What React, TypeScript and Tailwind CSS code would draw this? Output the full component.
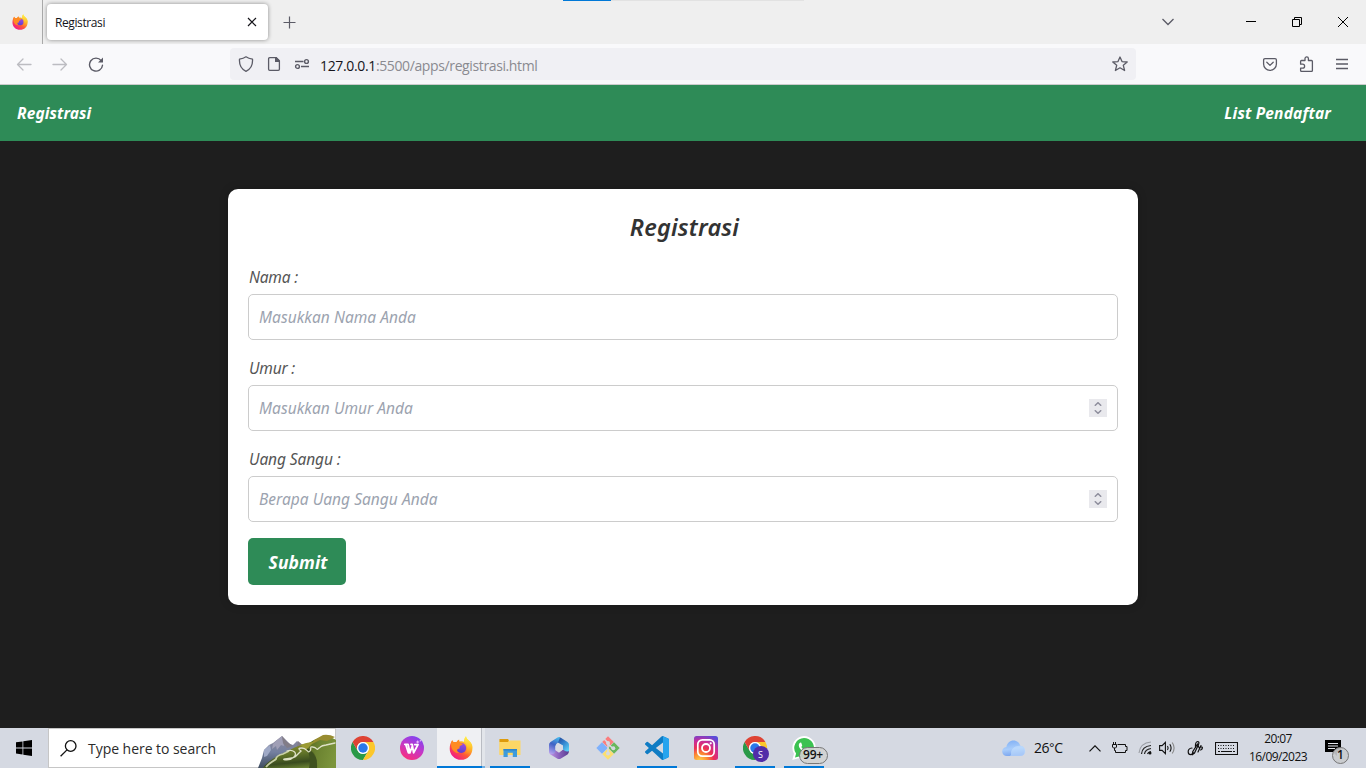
import type { ReactNode } from "react";

const ui = "font-['Open_Sans','Noto_Sans',sans-serif]";
const body = "font-['Noto_Sans','Open_Sans',sans-serif]";

function FirefoxLogo({ size, id }: { size: number; id: string }) {
  return (
    <svg width={size} height={size} viewBox="0 0 24 24">
      <defs>
        <linearGradient id={id + "a"} x1="0.85" y1="0.1" x2="0.2" y2="0.95">
          <stop offset="0" stopColor="#fff44f" />
          <stop offset="0.3" stopColor="#ffb02a" />
          <stop offset="0.6" stopColor="#ff5a36" />
          <stop offset="1" stopColor="#f0158c" />
        </linearGradient>
        <linearGradient id={id + "b"} x1="0.6" y1="0" x2="0.4" y2="1">
          <stop offset="0" stopColor="#a04be0" />
          <stop offset="1" stopColor="#5b3fd0" />
        </linearGradient>
        <linearGradient id={id + "c"} x1="0.6" y1="0" x2="0.5" y2="1">
          <stop offset="0" stopColor="#fff44f" />
          <stop offset="0.55" stopColor="#ffc52e" />
          <stop offset="1" stopColor="#ff8a16" stopOpacity="0.3" />
        </linearGradient>
      </defs>
      <path
        d="M3.2 4.2c.5 1 .9 1.5 1.5 2 .9-.2 1.9-.2 2.800.1C8 4.900 9 4 10.200 3.700c-.3.8-.2 1.500.1 2.100 2-.8 3.700-.6 5 .3-.4-2 .3-4.400 1.700-5.800.2 2 1.500 3.100 3.200 4.800 2 2 3.200 4.600 3.200 7.600 0 6.200-5 11.100-11.300 11.100S.7 18.900.7 12.700c0-3.400 1-6.400 2.500-8.500z"
        fill={`url(#${id}a)`}
      />
      <path d="M17 .3c-1.400 1.400-2.100 3.800-1.700 5.800 2.500 1.700 3.400 4.300 2.800 7-.5 2.500-2 4-4 5.300 4.800.2 9.200-3 9.300-7.500 0-2.300-1.200-4.200-3.200-6C18.500 3.300 17.200 2.300 17 .3z" fill={`url(#${id}c)`} />
      <circle cx="12.300" cy="12" r="4.900" fill={`url(#${id}b)`} />
      <path d="M3.200 4.200c.5 1 .9 1.500 1.500 2 .9-.2 1.900-.2 2.800.1C8 4.900 9 4 10.200 3.700c-.3 1.600.3 2.700 1.900 3.500.6.300 1.300.4 1.700.9-.2 1.300-2.400 1.300-3.200 2.300-.3.900.3 1.700-.4 2.300-1.200-.3-2 .4-2.200 1.500.2 1.500 1.200 2.300 2.200 2.800-4 .2-6.500-2-7.600-5C1.700 9 2 6.200 3.200 4.200z" fill="#ff8b22" />
    </svg>
  );
}

function ChromeLogo() {
  return (
    <svg width="24" height="24" viewBox="0 0 48 48">
      <path d="M3.200 12 13.600 30A12 12 0 0 0 34.400 30L24 48A24 24 0 0 1 3.200 12z" fill="#2a9a48" />
      <path d="M24 48 34.400 30A12 12 0 0 0 24 12H44.800A24 24 0 0 1 24 48z" fill="#fcc72b" />
      <path d="M44.800 12H24A12 12 0 0 0 13.600 30L3.200 12A24 24 0 0 1 44.800 12z" fill="#de4334" />
      <circle cx="24" cy="24" r="12" fill="#fff" />
      <circle cx="24" cy="24" r="9.500" fill="#2a78ea" />
    </svg>
  );
}

function WpsLogo() {
  return (
    <svg width="24" height="24" viewBox="0 0 24 24">
      <defs>
        <linearGradient id="wps" x1="0.8" y1="0" x2="0.3" y2="1">
          <stop offset="0" stopColor="#7a45f5" />
          <stop offset="0.5" stopColor="#c437c8" />
          <stop offset="1" stopColor="#fb2f7a" />
        </linearGradient>
      </defs>
      <circle cx="12" cy="12" r="12" fill="url(#wps)" />
      <path d="M4.800 8.300H8L10 16.800H8.400L5.800 8.800M10 16.500 12.200 10.500M11 8.300H12.200L13.600 16.800 18 8.600H14.800" fill="none" stroke="#fff" strokeWidth="1.800" strokeLinejoin="round" strokeLinecap="round" />
      <path d="M17.700 4.500v3M16.200 6h3M20.300 4v1.500" stroke="#f5c8ff" strokeWidth="0.900" />
    </svg>
  );
}

function ExplorerLogo() {
  return (
    <svg width="22" height="20" viewBox="0 0 22 20">
      <path d="M.5 1.500h8.500l1.500 2H21v13H.5z" fill="#fcd35c" />
      <path d="M.5 1h8.500l.8 1.200-.8 1.800H.5z" fill="#dd9b0c" />
      <path d="M.5 4h9.200l1.200-1.500H21.500v14.500H.5z" fill="#fdd765" />
      <path d="M4.500 11h13.500v8h-4.200v-4.300H8.700V19H4.500z" fill="#3d9bdc" />
      <path d="M4.500 11h13.500v1.600H4.500z" fill="#2f86cc" />
    </svg>
  );
}

function OfficeLogo() {
  return (
    <svg width="22" height="24" viewBox="0 0 22 24">
      <defs>
        <linearGradient id="o1" x1="0.6" y1="0" x2="0.3" y2="1">
          <stop offset="0" stopColor="#45b3ea" />
          <stop offset="0.45" stopColor="#3f62c4" />
          <stop offset="1" stopColor="#b4a0ee" />
        </linearGradient>
        <linearGradient id="o2" x1="0" y1="0" x2="0.8" y2="1">
          <stop offset="0" stopColor="#25418f" />
          <stop offset="0.45" stopColor="#2e78c8" />
          <stop offset="1" stopColor="#58cdf4" />
        </linearGradient>
        <linearGradient id="o3" x1="0" y1="0" x2="1" y2="0">
          <stop offset="0" stopColor="#c49be8" />
          <stop offset="0.5" stopColor="#8a62bd" />
          <stop offset="1" stopColor="#5a3c90" />
        </linearGradient>
      </defs>
      <path d="m1 15 6-1 4 2.800 4-3.300 6 1q0 3-1.500 4l-7 4.200q-1.500.8-3 0l-7-4.200Q1 17.200 1 15z" fill="url(#o3)" />
      <path d="M11 1.200q1 0 1.800.5L19.500 6Q21 7 21 8.800v6.200q-3 1.500-6-1.500V9.500L9 6z" fill="url(#o2)" />
      <path d="M12.300 1Q11 .7 9.500 1.600L2.500 6Q1 7 1 8.800v6.500q0 2 1.500 3 4.500.2 4.800-3.300V10Q8 7.500 10 6.500z" fill="url(#o1)" />
      <path d="M11.500 8 14.600 9.800v4L11.200 16l-3.500-2V10z" fill="#d8dae4" />
    </svg>
  );
}

function GitLogo() {
  return (
    <svg width="24" height="24" viewBox="0 0 24 24">
      <path d="M12 .3 17.800 6 12 11.800 6.200 6z" fill="#fb7d7d" />
      <path d="M18 6.200 23.700 12 18 17.800 12.200 12z" fill="#69b75c" />
      <path d="M12 12.200 17.800 18 12 23.700 6.200 18z" fill="#fbdf72" />
      <path d="M6 6.200 11.800 12 6 17.800 .3 12z" fill="#7eb1fc" />
      <path d="M8 2.800 12 7v11M12 8l5.500 5" stroke="#d5d9e1" strokeWidth="1.600" fill="none" />
      <circle cx="12" cy="7" r="2" fill="#d5d9e1" />
      <circle cx="12" cy="17.500" r="2" fill="#d5d9e1" />
      <circle cx="17.300" cy="12.300" r="2" fill="#d5d9e1" />
    </svg>
  );
}

function CodeLogo() {
  return (
    <svg width="24" height="24" viewBox="0 0 24 24">
      <path
        d="M23.150 2.587 18.210.21a1.494 1.494 0 0 0-1.705.29l-9.460 8.630-4.120-3.128a.999.999 0 0 0-1.276.057L.327 7.261A1 1 0 0 0 .326 8.740L3.899 12 .326 15.260a1 1 0 0 0 .001 1.479L1.650 17.940a.999.999 0 0 0 1.276.057l4.120-3.128 9.460 8.630a1.492 1.492 0 0 0 1.704.29l4.942-2.377A1.500 1.500 0 0 0 24 20.060V3.939a1.500 1.500 0 0 0-.85-1.352zm-5.146 14.861L10.826 12l7.178-5.448v10.896z"
        fill="#0f7cc4"
      />
      <path d="M18 .2 23.150 2.587A1.500 1.500 0 0 1 24 3.939V20.060a1.500 1.500 0 0 1-.85 1.352L18 23.800z" fill="#27a4ee" />
    </svg>
  );
}

function InstagramLogo() {
  return (
    <svg width="24" height="24" viewBox="0 0 24 24">
      <defs>
        <radialGradient id="ig" cx="0.25" cy="1.050" r="1.150">
          <stop offset="0" stopColor="#ffd84f" />
          <stop offset="0.28" stopColor="#fb8b32" />
          <stop offset="0.5" stopColor="#ec2f55" />
          <stop offset="0.75" stopColor="#c52d9c" />
          <stop offset="1" stopColor="#5a4bd8" />
        </radialGradient>
      </defs>
      <rect width="24" height="24" rx="2.500" fill="url(#ig)" />
      <rect x="3.800" y="3.800" width="16.400" height="16.400" rx="4.500" fill="none" stroke="#fff" strokeWidth="1.700" />
      <circle cx="12" cy="12" r="4" fill="none" stroke="#fff" strokeWidth="1.800" />
      <circle cx="16.700" cy="7.300" r="1.100" fill="#fff" />
    </svg>
  );
}

function WhatsAppLogo() {
  return (
    <svg width="24" height="24" viewBox="0 0 24 24">
      <path d="M12 0a11.800 11.800 0 1 1-5.500 22.300L.3 24l1.700-6.200A11.800 11.800 0 0 1 12 0z" fill="#fff" />
      <path d="M12 2a9.900 9.900 0 1 1-5 18.400L3 21.400l1.100-3.800A9.900 9.900 0 0 1 12 2z" fill="#3cc251" />
      <path d="M8.700 6.500c-.6 0-1.900.9-1.900 2.700 0 1.900 1.400 3.700 2.800 5 1.500 1.500 3.500 2.600 5 2.600 1.500 0 2.600-1 2.700-2 .1-.6 0-.8-.3-.9l-2.100-1c-.4-.1-.6 0-.8.3l-.9 1.100c-1.700-.6-3.100-1.900-3.900-3.400l.9-1.200c.1-.3-.7-2.400-.9-2.800-.1-.3-.3-.4-.6-.4z" fill="#fff" />
    </svg>
  );
}

function Mountains() {
  return (
    <svg width="78" height="34" viewBox="0 0 78 34">
      <defs>
        <linearGradient id="m1" x1="0" y1="0" x2="0" y2="1">
          <stop offset="0" stopColor="#918b9b" />
          <stop offset="0.5" stopColor="#7480a0" />
          <stop offset="1" stopColor="#3f4d60" />
        </linearGradient>
        <linearGradient id="m2" x1="0.3" y1="0" x2="0.6" y2="1">
          <stop offset="0" stopColor="#8f8f2c" />
          <stop offset="0.45" stopColor="#5f7228" />
          <stop offset="0.75" stopColor="#3a4c1f" />
          <stop offset="1" stopColor="#6d8534" />
        </linearGradient>
        <linearGradient id="m3" x1="0" y1="0.2" x2="1" y2="0.500">
          <stop offset="0" stopColor="#55681f" />
          <stop offset="0.4" stopColor="#6b8230" />
          <stop offset="1" stopColor="#7c953c" />
        </linearGradient>
      </defs>
      <path d="M0 34 4 24l2-8 5-5 4-2 9-7 8 8 3 1 4-4 6 5 10 6v16z" fill="url(#m1)" />
      <path d="m24 2-6 5-3 3-1 5 4-3 1 4 4-5 3 1z" fill="#a09fb6" />
      <path d="m24 2 1 7 4 5 6-2-6-4zM40 7l-1 6 6 2 2-2z" fill="#827d88" />
      <path d="m6 16 6-5 1 5-4 6-3 1z" fill="#9fa9c6" />
      <path d="M5 34c3-5 10-10 17-13 8-4 14-8 24-11 6-1 11-2 17 2l15 5v17z" fill="url(#m2)" />
      <path d="M48 11c8-5 14-9 22-8 4 0 6 2 8 3v28H59c1-10-3-18-11-23z" fill="url(#m3)" />
      <path d="M46 12q14 6 13 22h-8q3-14-5-22z" fill="#3f521f" />
      <path d="m56 6 9-5q6-1 12 2l-8 4-7-1-8 4z" fill="#988c30" />
      <path d="M42 11q8-3 14-3l-8 8q-3-3-6-5z" fill="#9a9a33" />
      <path d="M8 33c3-4 8-6 10-8 0-3 3-4 7-5l6-3" fill="none" stroke="#c8cfa6" strokeWidth="1.800" />
      <path d="M29 17c6-2 11 2 7 6-4 4-12 3-10 2s9 1 13-4l4-4c-3-2-3-3 1-3 5 0 6 6 8 3 2-2-1-5 3-4 5 1 3 4 6 1 3-2 1-2 7-3l9-2" fill="none" stroke="#dee1c6" strokeWidth="1.300" strokeLinecap="round" />
    </svg>
  );
}

function Cloud() {
  return (
    <svg width="24" height="17" viewBox="0 0 24 17">
      <defs>
        <linearGradient id="cl" x1="0" y1="0" x2="0.200" y2="1">
          <stop offset="0" stopColor="#7eaef4" />
          <stop offset="0.6" stopColor="#a9cdfb" />
          <stop offset="1" stopColor="#7fa9f0" />
        </linearGradient>
      </defs>
      <path d="M5 16a4.500 4.500 0 0 1-.6-9C5 3 8 .5 11.500.5c3.500 0 6 2.200 6.800 5.200A5.200 5.200 0 0 1 18.500 16z" fill="url(#cl)" />
      <path d="M9 12c1-4 4-6.300 8.500-6.300A5.200 5.200 0 0 1 19 16H6c4 0 3-2 3-4z" fill="#c5dffd" opacity="0.6" />
    </svg>
  );
}

type TaskProps = { children: ReactNode; open?: boolean };

function Task({ children, open }: TaskProps) {
  return (
    <div className="flex h-10 w-[49px] shrink-0 flex-col items-center">
      <div className="flex h-[38px] w-full items-center justify-center pt-0.5">{children}</div>
      {open && <div className="h-0.5 w-10 bg-[#0078d7]" />}
    </div>
  );
}

function TitleBar() {
  return (
    <div className="relative flex h-11 items-center bg-[#efefef]">
      <div className="absolute left-[563px] top-0 h-px w-12 bg-[#0078d7]" />
      <div className="absolute left-[611px] top-0 h-px w-[193px] bg-[#e2e2e2]" />
      <div className="flex h-full w-[43px] items-center border-r border-[#a9a9a9] pl-3">
        <FirefoxLogo size={16} id="tab" />
      </div>
      <div className="ml-1 flex h-9 w-[221px] items-center justify-between rounded bg-white pl-2 pr-[11px] shadow-[0_0_4px_rgba(0,0,0,0.42)]">
        <span className="pt-px text-[12px] tracking-[-0.4px] text-[#15141a]">Registrasi</span>
        <svg width="10" height="10" viewBox="0 0 10 10">
          <path d="m1 1 8 8M9 1 1 9" stroke="#15141a" strokeWidth="1.200" />
        </svg>
      </div>
      <svg className="ml-[15px]" width="13" height="13" viewBox="0 0 13 13">
        <path d="M6.500.5v12M.5 6.500h12" stroke="#5b5b66" strokeWidth="1.200" />
      </svg>
      <svg className="ml-auto mr-[71px]" width="14" height="8" viewBox="0 0 14 8">
        <path d="m1.500 1 5.500 5.500L12.500 1" fill="none" stroke="#5b5b66" strokeWidth="1.300" />
      </svg>
      <svg className="mr-9" width="10" height="10" viewBox="0 0 10 10">
        <path d="M0 4.500h10" stroke="#000" />
      </svg>
      <svg className="mr-9" width="10" height="10" viewBox="0 0 10 10">
        <path d="M.5 2.500h7v7h-7zM2.500 2.500v-2h7v7h-2" fill="none" stroke="#000" />
      </svg>
      <svg className="mr-[18px]" width="10" height="10" viewBox="0 0 10 10">
        <path d="m0 0 10 10M10 0 0 10" stroke="#000" />
      </svg>
    </div>
  );
}

function ToolBar() {
  return (
    <div className="flex h-[41px] items-center border-b border-[#cccccc] bg-[#f9f9fb]">
      <svg className="ml-4" width="16" height="16" viewBox="0 0 16 16" fill="none" stroke="#bcbcc1" strokeWidth="1.300" strokeLinecap="round" strokeLinejoin="round">
        <path d="M15 8.500H1.500M7 3 1.500 8.500 7 14" />
      </svg>
      <svg className="ml-5" width="16" height="16" viewBox="0 0 16 16" fill="none" stroke="#bcbcc1" strokeWidth="1.300" strokeLinecap="round" strokeLinejoin="round">
        <path d="M1 8.500h13.500M9 3 14.500 8.500 9 14" />
      </svg>
      <svg className="ml-5" width="16" height="16" viewBox="0 0 16 16">
        <path d="M13.200 4.700A6.500 6.500 0 1 0 14.500 9.200" fill="none" stroke="#5b5b66" strokeWidth="1.400" strokeLinecap="round" />
        <path d="M15 1.500v5H10z" fill="#5b5b66" />
      </svg>
      <div className="ml-[126px] flex h-8 w-[906px] items-center rounded bg-[#f0f0f4] pl-2">
        <svg width="16" height="16" viewBox="0 0 16 16" fill="none" stroke="#5b5b66" strokeWidth="1.300" strokeLinejoin="round">
          <path d="M8 .8c2 1.400 4.300 2 6.500 2.300.4 5.500-1.500 10-6.500 12.200C3 13.100 1.100 8.600 1.500 3.100 3.700 2.800 6 2.200 8 .8z" />
        </svg>
        <svg className="ml-3" width="16" height="16" viewBox="0 0 16 16">
          <path d="M10 1.600H3.700q-1.100 0-1.100 1.100v10.600q0 1.100 1.100 1.100h8.600q1.100 0 1.100-1.100V5z" fill="none" stroke="#5b5b66" strokeWidth="1.300" />
          <path d="M9 1h1.500L14 4.500V6H9z" fill="#5b5b66" />
        </svg>
        <svg className="ml-3" width="16" height="16" viewBox="0 0 16 16" fill="none" stroke="#5b5b66" strokeWidth="1.400">
          <path d="M1 5.500h8.500M7 10.500h8" />
          <circle cx="12.500" cy="5.500" r="1.900" />
          <circle cx="3.500" cy="10.500" r="1.900" />
        </svg>
        <span className="ml-2.5 pt-0.5 text-[14px] tracking-[-0.38px] text-[#8a8a90]">
          <span className="tracking-[-0.35px] text-[#15141a]">127.0.0.1</span>:5500/apps/registrasi.html
        </span>
        <svg className="ml-auto mr-2" width="16" height="16" viewBox="0 0 16 16" fill="none" stroke="#5b5b66" strokeWidth="1.300" strokeLinejoin="round">
          <path d="m8 1 2 4.600 5.200.4-3.900 3.300 1.300 5.200L8 11.800l-4.600 2.700 1.300-5.200L.8 6 6 5.600z" />
        </svg>
      </div>
      <svg className="ml-[126px]" width="16" height="16" viewBox="0 0 16 16" fill="none" stroke="#5b5b66" strokeWidth="1.300" strokeLinecap="round" strokeLinejoin="round">
        <path d="M3 2.600h10q1.400 0 1.400 1.400v4a6.400 6.400 0 0 1-12.800 0V4q0-1.400 1.400-1.400zM4.800 6.300 8 9.400l3.200-3.100" />
      </svg>
      <svg className="ml-5" width="16" height="16" viewBox="0 0 16 16" fill="none" stroke="#5b5b66" strokeWidth="1.300" strokeLinejoin="round">
        <path d="M2.600 7V5.400q0-.9.900-.9H7V2.600a1.700 1.700 0 0 1 3.400 0v1.900h3.100q.9 0 .9.900v9.200q0 .8-.9.800H3.500q-.9 0-.9-.8v-2.400h2a2 2 0 0 0 0-4H2.600z" />
      </svg>
      <svg className="ml-5" width="16" height="16" viewBox="0 0 16 16">
        <path d="M2 3.500h12M2 8h12M2 12.500h12" stroke="#5b5b66" strokeWidth="1.300" />
      </svg>
    </div>
  );
}

function Spinner() {
  return (
    <div className="flex size-[18px] flex-col items-center justify-center gap-1 bg-[#e9e9ed]">
      <svg width="8" height="4" viewBox="0 0 8 4">
        <path d="m.8 3.700 3.200-3 3.200 3" fill="none" stroke="#8f8f9d" strokeWidth="1.500" />
      </svg>
      <svg width="8" height="4" viewBox="0 0 8 4">
        <path d="m.8.300 3.200 3 3.200-3" fill="none" stroke="#8f8f9d" strokeWidth="1.500" />
      </svg>
    </div>
  );
}

type FieldProps = { label: ReactNode; placeholder: string; numeric?: boolean };

function Field({ label, placeholder, numeric }: FieldProps) {
  return (
    <div>
      <div className="mb-[5px] h-[23px] pl-px text-[15.5px] leading-[23px] text-[#555555]">{label}</div>
      <div className="flex h-[46px] items-center justify-between rounded-[5px] border border-[#cccccc] px-2.5 text-[15.5px] text-[#9ca3af]">
        <span className="pt-0.5 tracking-[0.03px]">{placeholder}</span>
        {numeric && <Spinner />}
      </div>
    </div>
  );
}

function TaskBar() {
  return (
    <div className="flex h-10 bg-[#d5d9e2] text-[#111]">
      <div className="flex w-12 items-center justify-center">
        <svg width="16" height="16" viewBox="0 0 16 16">
          <path d="M0 2.300 6.500 1.400v6.100H0zM7.300 1.300 16 0v7.500H7.300zM0 8.400h6.500v6.100L0 13.600zM7.300 8.400H16V16l-8.700-1.300z" />
        </svg>
      </div>
      <div className="flex h-10 w-[288px] items-center border border-[#c6c6c6] bg-white pl-[11px]">
        <svg width="17" height="17" viewBox="0 0 17 17" fill="none" stroke="#111" strokeWidth="1.300">
          <circle cx="10.700" cy="6" r="5.300" />
          <path d="M7 9.900.6 16.300" />
        </svg>
        <span className="ml-[11px] text-[14px] tracking-[-0.04px] text-[#2b2b2b]">Type here to search</span>
        <div className="-mb-px -mr-px ml-auto self-end">
          <Mountains />
        </div>
      </div>
      <div className="ml-0.5 flex">
        <Task><ChromeLogo /></Task>
        <Task><WpsLogo /></Task>
        <div className="flex h-10 w-[49px] flex-col pl-px">
          <div className="flex h-[38px]">
            <div className="flex w-[45px] items-center justify-center border-r border-[#b9bcc3] bg-[#eff0f3] pl-[3px] pt-0.5">
              <FirefoxLogo size={24} id="task" />
            </div>
            <div className="w-[3px] bg-[#e2e5ea]" />
          </div>
          <div className="h-0.5 border-r-[3px] border-[#72afe2] bg-[#0078d7]" />
        </div>
        <Task open><ExplorerLogo /></Task>
        <Task><OfficeLogo /></Task>
        <Task><GitLogo /></Task>
        <Task open><CodeLogo /></Task>
        <Task><InstagramLogo /></Task>
        <Task open>
          <div className="relative">
            <ChromeLogo />
            <div className="absolute left-[10px] top-[10px] flex size-4 items-center justify-center rounded-full bg-[#512da8] text-[9px] leading-none text-white">
              S
            </div>
          </div>
        </Task>
        <Task open>
          <div className="relative">
            <WhatsAppLogo />
            <div className="absolute left-[7px] top-[11px] flex h-[17px] w-[29px] items-center justify-center rounded-full border border-[#777] bg-[#d2d2d2]/90 pb-px text-[12px] font-semibold leading-none tracking-[-0.2px] text-[#111]">
              99+
            </div>
          </div>
        </Task>
      </div>
      <div className="ml-auto flex items-center">
        <Cloud />
        <span className="ml-2 w-[32px] whitespace-nowrap text-[14px] tracking-[-0.5px]">
          26<span className="font-['Liberation_Sans',sans-serif]">°</span>C
        </span>
        <svg className="ml-[23px]" width="12" height="7" viewBox="0 0 12 7">
          <path d="m.5 6.300 5.500-5.500 5.500 5.500" fill="none" stroke="#111" strokeWidth="1.200" />
        </svg>
        <svg className="ml-2.5" width="17" height="14" viewBox="0 0 17 14" fill="none" stroke="#111">
          <path d="M6.500 3.500h8v2h1.500v4h-1.500v2h-10v-2M2.500 1v2M4.500 1v2M1.500 3.500h4v2.500l-1 1h-2l-1-1zM3.500 7v2.500h1" />
        </svg>
        <svg className="ml-[10px]" width="15" height="14" viewBox="0 0 15 14" fill="none">
          <path d="M1 12Q2 2 13 1" stroke="#999ca3" strokeWidth="1.100" />
          <path d="M3.500 13Q4 5.500 13 4.500M6.500 13q.5-4.500 6.500-5.500M9.500 13q.5-2 3.500-2.500" stroke="#222" strokeWidth="1.200" />
          <circle cx="12" cy="12" r="1.500" fill="#111" />
        </svg>
        <svg className="ml-1.5" width="17" height="14" viewBox="0 0 17 14" fill="none" stroke="#111" strokeWidth="1.100">
          <path d="M.6 4.600h2.500L6.400 1.400v11.200L3.100 9.400H.6zM8.500 5q1.300 2 0 4M10.800 3.200q2.600 3.800 0 7.600" />
          <path d="M13.200 1.500q3.800 5.500 0 11" stroke="#888" />
        </svg>
        <svg className="ml-[11px]" width="17" height="17" viewBox="0 0 17 17" fill="none" stroke="#111" strokeWidth="1.200" strokeLinecap="round">
          <path d="M5 8Q1 8.500 1.200 12q.2 2.700 2.300 2.700 2-.2 2.700-2.200M8.500 7.500Q8 2 10.500 1.500q2.200 0 1 3L7.500 13l-2 1.500.2-2.800L10.500 4" />
          <path d="M10.500 4.500 12 7.500q2.700-1.300 3.400 0 .3 1.500-1.700 2.500M11 12l3-6.500" />
        </svg>
        <svg className="ml-[11px]" width="23" height="13" viewBox="0 0 23 13" fill="none" stroke="#111">
          <path d="M.5.5h22v12H.5z" strokeWidth="1.100" />
          <path d="M3 3.500h17M3 6.500h17" strokeDasharray="1 1.500" strokeWidth="1.200" />
          <path d="M3 9.500h2M6 9.500h11M18 9.500h2" />
        </svg>
        <div className="ml-[10px] flex w-[60px] flex-col items-center text-[12px] leading-[18px]">
          <span className="tracking-[-0.6px]">20:07</span>
          <span className="tracking-[-0.57px]">16/09/2023</span>
        </div>
        <div className="relative ml-[17px] mr-[25px] h-[16px] w-4">
          <svg width="16" height="16" viewBox="0 0 16 16">
            <path d="M0 0h16v12h-4v4l-4-4H0z" fill="#000" />
            <path d="M3 3.500h10M3 6h10M3 8.500h7" stroke="#e4e6ec" />
          </svg>
          <div className="absolute left-[7px] top-[7px] flex size-[17px] items-center justify-center rounded-full border border-[#777] bg-[#c9cacd]/90 pb-px text-[12px] font-semibold leading-none">
            1
          </div>
        </div>
      </div>
    </div>
  );
}

export default function App() {
  return (
    <div className={`flex h-[768px] w-[1366px] flex-col overflow-hidden ${ui}`}>
      <TitleBar />
      <ToolBar />
      <div className={`flex grow flex-col bg-[#1e1e1e] italic ${body}`}>
        <nav className="flex h-14 items-center justify-between bg-[#2e8b57] pl-[17px] pr-[35px] pt-0.5 text-[15.5px] font-bold text-white">
          <span className="tracking-[0.1px]">Registrasi</span>
          <span className="tracking-[0.18px]">List Pendaftar</span>
        </nav>
        <main className="mx-auto mt-12 h-[416px] w-[910px] rounded-[10px] bg-white p-5 shadow-[0_0_10px_rgba(0,0,0,0.2)]">
          <h1 className="mb-5 h-[37px] pl-[3px] text-center text-[23.500px] font-semibold leading-[37px] tracking-[0.2px] text-[#333333]">Registrasi</h1>
          <div className="flex flex-col gap-[17px]">
            <Field label={<span className="tracking-[-0.2px]">Nama :</span>} placeholder="Masukkan Nama Anda" />
            <Field label={<span className="tracking-[-0.2px]">Umur :</span>} placeholder="Masukkan Umur Anda" numeric />
            <Field label={<span className="tracking-[-0.1px]">Uang Sangu :</span>} placeholder="Berapa Uang Sangu Anda" numeric />
          </div>
          <button className="mt-4 flex h-[47px] w-[98px] items-center justify-center rounded-[5px] bg-[#2e8b57] pl-0.5 pt-0.5 text-[17.500px] font-bold italic tracking-[0.05px] text-white">
            Submit
          </button>
        </main>
      </div>
      <TaskBar />
    </div>
  );
}
